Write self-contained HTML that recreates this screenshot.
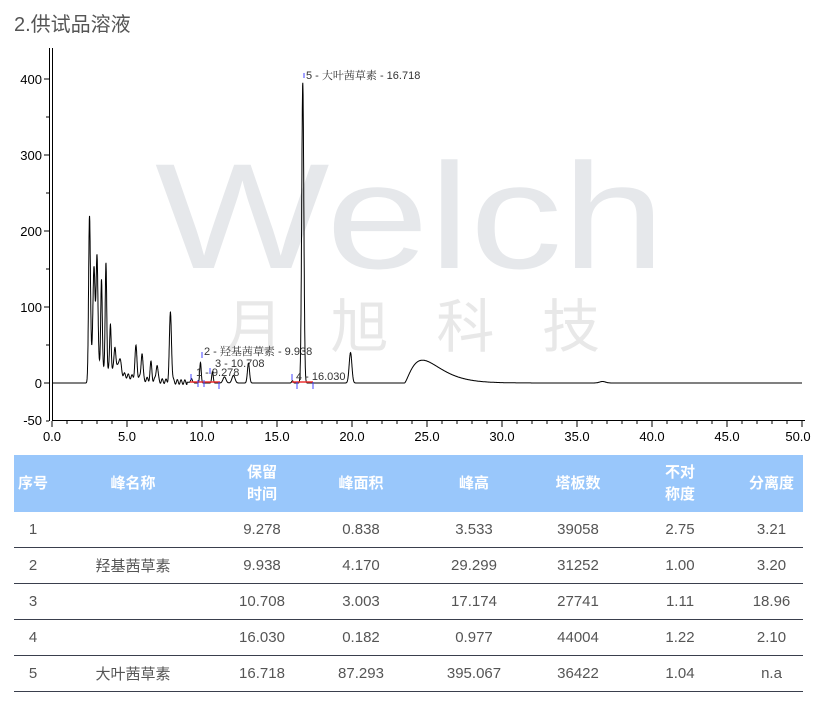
<!DOCTYPE html>
<html><head><meta charset="utf-8"><style>
body{margin:0;background:#fff;width:822px;height:708px;overflow:hidden;font-family:"Liberation Sans","Noto Sans CJK SC",sans-serif;position:relative}
.t{position:absolute;left:14px;top:8px;font-size:20px;color:#555}
svg{position:absolute;left:0;top:0}
table{position:absolute;left:14px;top:455px;width:789px;border-collapse:collapse;font-size:15px;color:#555;table-layout:fixed}
th{background:#99c7fb;color:#fff;font-weight:bold;height:57px;line-height:22px;padding:0;font-size:15px}
td{height:35px;text-align:center;border-bottom:1px solid #3a3f4d;padding:0}
</style></head><body>
<div class="t">2.供试品溶液</div>
<svg width="822" height="455" viewBox="0 0 822 455">
<text x="155" y="268" font-size="150" fill="#e6e8eb" textLength="510" lengthAdjust="spacingAndGlyphs" font-family="Liberation Sans,sans-serif">Welch</text>
<text x="225" y="347" font-size="58" fill="#e8e8e8" textLength="375" font-family="Noto Sans CJK SC,sans-serif">月旭科技</text>
<g stroke="#000" fill="none" stroke-width="1">
<line x1="49.5" y1="48" x2="49.5" y2="421"/><line x1="52.5" y1="48" x2="52.5" y2="421"/>
<line x1="52" y1="420.5" x2="805" y2="420.5"/>
</g>
<g id="ticks" stroke="#000"></g>
<g font-size="13" fill="#000" font-family="Liberation Sans,sans-serif" text-anchor="end">
<text x="42" y="84">400</text><text x="42" y="160">300</text><text x="42" y="236">200</text><text x="42" y="312">100</text><text x="42" y="388">0</text><text x="42" y="425">-50</text>
</g>
<g id="xl" font-size="13" fill="#000" font-family="Liberation Sans,sans-serif" text-anchor="middle"></g>
<path id="chrom" stroke="#000" fill="none" stroke-width="1"/>
<g stroke="#e33" stroke-width="1.5"><line x1="190" y1="382" x2="220" y2="382"/><line x1="292" y1="382" x2="313" y2="382"/></g>
<g stroke="#44f"><line x1="191" y1="374" x2="191" y2="380"/><line x1="198" y1="380" x2="198" y2="387"/><line x1="202" y1="352" x2="202" y2="358"/><line x1="204" y1="380" x2="204" y2="387"/><line x1="210" y1="368" x2="210" y2="374"/><line x1="219" y1="382" x2="219" y2="389"/><line x1="292" y1="374" x2="292" y2="380"/><line x1="297" y1="382" x2="297" y2="389"/><line x1="313" y1="382" x2="313" y2="389"/><line x1="304" y1="73" x2="304" y2="78"/></g>
<g font-size="11" fill="#333" font-family="Liberation Sans,'Noto Serif CJK SC',sans-serif">
<text x="306" y="79">5 - 大叶茜草素 - 16.718</text>
<text x="204" y="355">2 - 羟基茜草素 - 9.938</text>
<text x="215" y="367">3 - 10.708</text>
<text x="196" y="376">1 - 9.278</text>
<text x="296" y="380">4 - 16.030</text>
</g>
</svg>
<script>
var X=t=>52+15*t,Y=v=>383-0.76*v;
var pk=[[2.5,200,.06],[2.8,120,.07],[3.0,140,.06],[3.3,110,.05],[3.6,135,.05],[3.9,60,.05],[4.2,35,.06],[4.5,20,.1],[5.6,40,.07],[6.0,35,.06],[6.6,22,.06],[7.0,22,.06],[7.9,90,.07],[9.3,5,.05],[9.9,27,.05],[10.7,15,.05],[11.5,8,.1],[12.1,10,.1],[13.1,26,.07],[16.03,3,.05],[16.72,395,.07],[19.9,40,.09],[36.7,2,.2]];
function f(t){var v=0;pk.forEach(p=>{v+=p[1]*Math.exp(-Math.pow((t-p[0])/p[2],2)/2)});
if(t>2.4&&t<9.5){v+=40*Math.exp(-(t-2.4)/1.8)*(1-Math.exp(-(t-2.4)*8))+(t<9?3*Math.sin(t*25):0)}
if(t>23.5){var u=t-23.5;v+=30*Math.pow(u/1.2,1.5)*Math.exp(1.5*(1-u/1.2))}
return v}
var d="";for(var t=0;t<=50;t+=0.01){d+=(t?"L":"M")+X(t).toFixed(1)+" "+Y(f(t)).toFixed(1)}
document.getElementById("chrom").setAttribute("d",d);
var g=document.getElementById("ticks"),s="";
for(var i=0;i<=50;i++){var x=X(i);s+='<line x1="'+x+'" y1="421" x2="'+x+'" y2="'+(i%5?424:427)+'"/>'}
for(var v=-50;v<=400;v+=50){var y=Y(v);s+='<line x1="'+(v%100?46:44)+'" y1="'+y+'" x2="49" y2="'+y+'"/>'}
g.innerHTML=s;var l="";for(var i=0;i<=50;i+=5)l+='<text x="'+(X(i)+(i==50?-4:0))+'" y="441">'+i.toFixed(1)+'</text>';
document.getElementById("xl").innerHTML=l;
</script>
<table>
<tr><th style="width:38px">序号</th><th style="width:162px">峰名称</th><th style="width:96px">保留<br>时间</th><th style="width:102px">峰面积</th><th style="width:124px">峰高</th><th style="width:84px">塔板数</th><th style="width:120px">不对<br>称度</th><th>分离度</th></tr>
<tr><td>1</td><td></td><td>9.278</td><td>0.838</td><td>3.533</td><td>39058</td><td>2.75</td><td>3.21</td></tr>
<tr><td>2</td><td>羟基茜草素</td><td>9.938</td><td>4.170</td><td>29.299</td><td>31252</td><td>1.00</td><td>3.20</td></tr>
<tr><td>3</td><td></td><td>10.708</td><td>3.003</td><td>17.174</td><td>27741</td><td>1.11</td><td>18.96</td></tr>
<tr><td>4</td><td></td><td>16.030</td><td>0.182</td><td>0.977</td><td>44004</td><td>1.22</td><td>2.10</td></tr>
<tr><td>5</td><td>大叶茜草素</td><td>16.718</td><td>87.293</td><td>395.067</td><td>36422</td><td>1.04</td><td>n.a</td></tr>
</table>
</body></html>
